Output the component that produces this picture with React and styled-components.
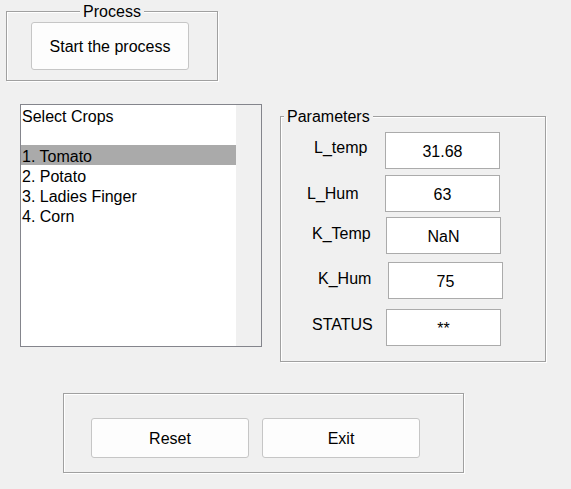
import React from 'react';
import styled, { createGlobalStyle } from 'styled-components';

const GlobalStyle = createGlobalStyle`
  html, body {
    margin: 0;
    padding: 0;
    background: #f0f0f0;
  }
  body {
    font-family: "Liberation Sans", Arial, sans-serif;
    font-size: 16px;
    color: #000;
  }
  * {
    box-sizing: border-box;
  }
`;

const Window = styled.div`
  width: 571px;
  height: 489px;
  display: flex;
  flex-direction: column;
  align-items: flex-start;
`;

const Panel = styled.div`
  position: relative;
  width: ${props => props.$w}px;
  height: ${props => props.$h}px;
  margin: ${props => props.$margin};
  padding: ${props => props.$pad};
  border: 1px solid #a0a0a0;
  box-shadow: 1px 1px 0 #fff, inset 1px 1px 0 #fff;
  display: flex;
  flex-direction: ${props => props.$dir || 'row'};
  align-items: flex-start;
  gap: ${props => props.$gap || 0}px;
`;

const TitleBar = styled.div`
  position: absolute;
  top: -9px;
  left: ${props => (props.$center ? '0' : '3px')};
  right: ${props => (props.$center ? '0' : 'auto')};
  text-align: ${props => (props.$center ? 'center' : 'left')};
  line-height: 18px;
  pointer-events: none;
`;

const Title = styled.span`
  background: #f0f0f0;
  padding: 0 3px;
`;

const PushButton = styled.button`
  width: 158px;
  height: ${props => props.$h}px;
  margin: 0;
  padding: 2px 0 0;
  background: #fdfdfd;
  border: 1px solid #c6c6c6;
  border-radius: 3px;
  font-family: inherit;
  font-size: 16px;
  color: #000;
  cursor: pointer;
`;

const MiddleRow = styled.div`
  display: flex;
  align-items: flex-start;
  margin-top: 23px;
`;

const ListBox = styled.div`
  width: 242px;
  height: 243px;
  margin-left: 20px;
  border: 1px solid #84858c;
  background: #fff;
  display: flex;
`;

const ListItems = styled.ul`
  flex: 1;
  margin: 0;
  padding: 0;
  list-style: none;
`;

const ListItem = styled.li`
  height: 20px;
  line-height: 24px;
  padding-left: 1px;
  white-space: nowrap;
  background: ${props => (props.$selected ? '#aaaaaa' : 'transparent')};
`;

const ScrollTrack = styled.div`
  width: 25px;
  align-self: stretch;
  background: #f0f0f0;
`;

const ParamRow = styled.div`
  display: flex;
  align-items: flex-start;
  margin-top: ${props => props.$gap}px;
`;

const ParamLabel = styled.div`
  width: ${props => props.$box}px;
  padding-left: ${props => props.$x}px;
  padding-top: ${props => props.$y}px;
  line-height: 18px;
  white-space: nowrap;
`;

const ValueBox = styled.div`
  width: 115px;
  height: 37px;
  padding-top: 2px;
  line-height: 34px;
  text-align: center;
  background: #fff;
  border: 1px solid #ababab;
`;

const crops = ['Select Crops', '', '1. Tomato', '2. Potato', '3. Ladies Finger', '4. Corn'];

const params = [
  { name: 'L_temp', value: '31.68', gap: 0, x: 33, y: 7, box: 104 },
  { name: 'L_Hum', value: '63', gap: 6, x: 26, y: 10, box: 104 },
  { name: 'K_Temp', value: 'NaN', gap: 5, x: 31, y: 8, box: 105 },
  { name: 'K_Hum', value: '75', gap: 8, x: 37, y: 8, box: 107 },
  { name: 'STATUS', value: '**', gap: 10, x: 31, y: 7, box: 105 },
];

export default function App() {
  return (
    <>
      <GlobalStyle />
      <Window>
        <Panel $w={212} $h={70} $margin="11px 0 0 6px" $pad="10px 0 0 24px">
          <TitleBar $center>
            <Title>Process</Title>
          </TitleBar>
          <PushButton $h={48}>Start the process</PushButton>
        </Panel>

        <MiddleRow>
          <ListBox>
            <ListItems>
              {crops.map((crop, i) => (
                <ListItem key={i} $selected={i === 2}>
                  {crop}
                </ListItem>
              ))}
            </ListItems>
            <ScrollTrack />
          </ListBox>

          <Panel
            $w={266}
            $h={246}
            $margin="12px 0 0 18px"
            $pad="15px 0 0 0"
            $dir="column"
          >
            <TitleBar>
              <Title>Parameters</Title>
            </TitleBar>
            {params.map(p => (
              <ParamRow key={p.name} $gap={p.gap}>
                <ParamLabel $x={p.x} $y={p.y} $box={p.box}>
                  {p.name}
                </ParamLabel>
                <ValueBox>{p.value}</ValueBox>
              </ParamRow>
            ))}
          </Panel>
        </MiddleRow>

        <Panel $w={401} $h={80} $margin="31px 0 0 63px" $pad="24px 0 0 27px" $gap={13}>
          <PushButton $h={40}>Reset</PushButton>
          <PushButton $h={40}>Exit</PushButton>
        </Panel>
      </Window>
    </>
  );
}
